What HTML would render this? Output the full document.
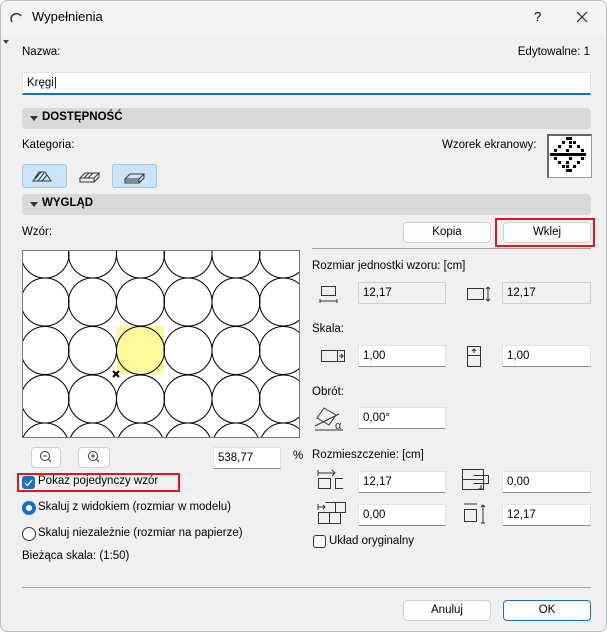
<!DOCTYPE html>
<html><head><meta charset="utf-8"><style>
*{box-sizing:border-box;margin:0;padding:0}
body{width:607px;height:632px;background:#fff;font-family:"Liberation Sans Narrow","Liberation Sans",sans-serif;font-size:11.5px;color:#000;position:relative;overflow:hidden}
.win{position:absolute;left:0;top:0;width:607px;height:632px;background:#f0f0f0;border:1px solid #bdbdbd;border-radius:7px;overflow:hidden}
.a{position:absolute;white-space:nowrap}
.fld{position:absolute;background:#fff;border:1px solid #e3e3e3;border-bottom:1px solid #8a8a8a;height:22px;padding:4px 0 0 4px}
.dis{background:#f0f0f0;border:1px solid #cfcfcf}
.btn{position:absolute;background:#fdfdfd;border:1px solid #d0d0d0;border-radius:4px;height:21px;text-align:center;padding-top:3px}
.hdr{position:absolute;left:21px;width:569px;height:21px;background:#d9d9d9;border-radius:4px;font-weight:bold;padding:3px 0 0 20px}
.hdr:before{content:"";position:absolute;left:8px;top:8px;border-left:4px solid transparent;border-right:4px solid transparent;border-top:5px solid #333}
.red{position:absolute;border:2px solid #e0161c}
</style></head><body><div class="win">
<div class="a" style="left:0;top:0;width:607px;height:34px;background:#f3f3f3"></div>
<svg class="a" style="left:9px;top:10px" width="14" height="14"><path d="M2 11 A5 5 0 0 1 11 5" fill="none" stroke="#333" stroke-width="1.5"/></svg>
<div class="a" style="left:31px;top:8px;font-size:13px">Wypełnienia</div>
<div class="a" style="left:533px;top:8px;font-size:13px">?</div>
<svg class="a" style="left:575px;top:10px" width="12" height="12"><path d="M1 1L11 11M11 1L1 11" stroke="#222" stroke-width="1.2"/></svg>
<div class="a" style="left:2px;top:39px;border-left:3px solid transparent;border-right:3px solid transparent;border-top:4px solid #444"></div>

<div class="a" style="left:21px;top:45px">Nazwa:</div>
<div class="a" style="right:16px;top:45px">Edytowalne: 1</div>
<div class="a" style="left:21px;top:71px;width:569px;height:23px;background:#fff;border:1px solid #e3e3e3;border-bottom:2px solid #1a6fc4;padding:4px 0 0 4px">Kręgi|</div>

<div class="hdr" style="top:107px">DOSTĘPNOŚĆ</div>
<div class="a" style="left:21px;top:138px">Kategoria:</div>
<div class="a" style="left:441px;top:138px">Wzorek ekranowy:</div>
<div class="a" style="left:546px;top:133px;width:45px;height:44px;background:#fff;border:1px solid #999;border-left:2px solid #666;border-top:2px solid #666"></div>
<svg class="a" style="left:549px;top:136px" width="40" height="40" fill="#000">
<rect x="16" y="0" width="3" height="3"/><rect x="19" y="0" width="3" height="3"/>
<rect x="12" y="4" width="3" height="3"/><rect x="19" y="4" width="3" height="3"/><rect x="23" y="4" width="3" height="3"/>
<rect x="8" y="8" width="3" height="3"/><rect x="19" y="8" width="3" height="3"/><rect x="27" y="8" width="3" height="3"/>
<rect x="4" y="12" width="3" height="3"/><rect x="16" y="12" width="3" height="3"/><rect x="31" y="12" width="3" height="3"/>
<rect x="0" y="16" width="36" height="3"/>
<rect x="4" y="20" width="3" height="3"/><rect x="19" y="20" width="3" height="3"/><rect x="31" y="20" width="3" height="3"/>
<rect x="8" y="24" width="3" height="3"/><rect x="16" y="24" width="3" height="3"/><rect x="27" y="24" width="3" height="3"/>
<rect x="12" y="28" width="3" height="3"/><rect x="16" y="28" width="3" height="3"/><rect x="23" y="28" width="3" height="3"/>
<rect x="16" y="32" width="6" height="3"/>
</svg>
<div class="a" style="left:21px;top:163px;width:45px;height:24px;background:#cce4f7;border:1px solid #99c9ef;border-radius:3px"></div>
<div class="a" style="left:111px;top:163px;width:45px;height:24px;background:#cce4f7;border:1px solid #99c9ef;border-radius:3px"></div>
<svg class="a" style="left:21px;top:163px" width="140" height="24" fill="none" stroke="#333" stroke-width="1">
<path d="M11 17L17 8H23L29 17Z M13 15L19 8 M16 17L22 9 M20 17L25 11"/>
<path d="M58 14H72L77 9H63Z M58 14V18H72V14 M72 18L77 13V9 M62 14L67 9 M66 14L71 9"/>
<path d="M103 15H117L122 10H108Z M103 15V19H117V15 M117 19L122 14V10 M103 17H117"/>
</svg>

<div class="hdr" style="top:193px">WYGLĄD</div>
<div class="a" style="left:21px;top:225px">Wzór:</div>
<div class="btn" style="left:402px;top:221px;width:88px">Kopia</div>
<div class="btn" style="left:502px;top:221px;width:88px">Wklej</div>
<div class="red" style="left:494px;top:217px;width:100px;height:29px"></div>

<svg class="a" style="left:21px;top:249px" width="278" height="188">
<rect x="0.5" y="0.5" width="277" height="187" fill="#fff" stroke="#777"/>
<rect x="95" y="76" width="47" height="48" fill="#fdf89a"/>
<g fill="none" stroke="#000" stroke-width="1">
<defs><clipPath id="c"><rect x="1" y="1" width="276" height="186"/></clipPath></defs>
<g clip-path="url(#c)">
<circle cx="23" cy="4" r="24"/><circle cx="70.5" cy="4" r="24"/><circle cx="118.5" cy="4" r="24"/><circle cx="166" cy="4" r="24"/><circle cx="214" cy="4" r="24"/><circle cx="261.5" cy="4" r="24"/>
<circle cx="23" cy="52" r="24"/><circle cx="70.5" cy="52" r="24"/><circle cx="118.5" cy="52" r="24"/><circle cx="166" cy="52" r="24"/><circle cx="214" cy="52" r="24"/><circle cx="261.5" cy="52" r="24"/>
<circle cx="23" cy="100.5" r="24"/><circle cx="70.5" cy="100.5" r="24"/><circle cx="118.5" cy="100.5" r="24"/><circle cx="166" cy="100.5" r="24"/><circle cx="214" cy="100.5" r="24"/><circle cx="261.5" cy="100.5" r="24"/>
<circle cx="23" cy="149" r="24"/><circle cx="70.5" cy="149" r="24"/><circle cx="118.5" cy="149" r="24"/><circle cx="166" cy="149" r="24"/><circle cx="214" cy="149" r="24"/><circle cx="261.5" cy="149" r="24"/>
<circle cx="23" cy="197" r="24"/><circle cx="70.5" cy="197" r="24"/><circle cx="118.5" cy="197" r="24"/><circle cx="166" cy="197" r="24"/><circle cx="214" cy="197" r="24"/><circle cx="261.5" cy="197" r="24"/>
</g>
<path d="M91 121L97 127M97 121L91 127" stroke-width="2"/>
</g></svg>

<div class="a" style="left:311px;top:247px;width:279px;height:1px;background:#a0a0a0"></div>
<div class="a" style="left:311px;top:259px">Rozmiar jednostki wzoru: [cm]</div>
<svg class="a" style="left:316px;top:284px" width="180" height="24" fill="none" stroke="#333">
<path d="M4.5 1.5H18.5V10.5H4.5Z M3 16H20 M3 14V18 M20 14V18"/>
<path d="M150.5 3.5H166.5V14.5H150.5Z M171 2V16 M169 4L171 2L173 4 M169 14L171 16L173 14"/>
</svg>
<div class="fld dis" style="left:357px;top:281px;width:88px">12,17</div>
<div class="fld dis" style="left:501px;top:281px;width:89px">12,17</div>
<div class="a" style="left:311px;top:322px">Skala:</div>
<svg class="a" style="left:316px;top:342px" width="180" height="26" fill="none" stroke="#333">
<path d="M4.5 7.5H20.5V18.5H4.5Z M20.5 7.5H27.5V18.5H20.5 M22 13H26 M24 11L26 13L24 15"/>
<path d="M150.5 3.5H163.5V23.5H150.5Z M150.5 12.5H163.5 M157 10V6 M155 8L157 6L159 8"/>
</svg>
<div class="fld" style="left:357px;top:344px;width:88px">1,00</div>
<div class="fld" style="left:501px;top:344px;width:89px">1,00</div>
<div class="a" style="left:311px;top:385px">Obrót:</div>
<svg class="a" style="left:312px;top:403px" width="36" height="28" fill="none" stroke="#333">
<path d="M4 14L11 4L23 11L16 21Z M2 22L26 10 M2 26H30"/>
<text x="22" y="25" font-size="11" fill="#333" stroke="none" font-family="Liberation Sans">α</text>
</svg>
<div class="fld" style="left:357px;top:406px;width:88px">0,00°</div>

<div class="btn" style="left:30px;top:446px;width:30px;height:21px"></div>
<div class="btn" style="left:77px;top:446px;width:32px;height:21px"></div>
<svg class="a" style="left:30px;top:446px" width="80" height="21" fill="none" stroke="#333">
<circle cx="14" cy="9" r="4.5"/><path d="M12 9H16 M17.5 12.5L20 15"/>
<circle cx="62" cy="9" r="4.5"/><path d="M60 9H64 M62 7V11 M65.5 12.5L68 15"/>
</svg>
<div class="fld" style="left:212px;top:446px;width:68px">538,77</div>
<div class="a" style="left:292px;top:449px">%</div>
<div class="a" style="left:311px;top:448px">Rozmieszczenie: [cm]</div>
<svg class="a" style="left:314px;top:466px" width="200" height="62" fill="none" stroke="#333">
<path d="M3 6H20 M17 3L20 6L17 9 M3 3V9 M3.5 11.5H15.5V21.5H3.5Z M28 11.5H20.5V21.5H28"/>
<path d="M3 40H10 M8 38L10 40L8 42 M3 37V43 M10.5 35.5H30.5V45.5H10.5 M20.5 35.5V45.5 M3.5 45.5H25.5V56.5H3.5Z M14.5 45.5V56.5"/>
<path d="M147.5 2.5H168.5V22.5H147.5Z M147.5 12.5H168.5 M158.5 8.5H173.5V16.5H158.5 M166 18V22 M163 22H169"/>
<path d="M149 37H162 M149.5 42.5H161.5V54.5H149.5Z M168 38V56 M166 40L168 38L170 40 M166 56H170"/>
</svg>
<div class="fld" style="left:357px;top:470px;width:88px">12,17</div>
<div class="fld" style="left:501px;top:470px;width:89px">0,00</div>
<div class="fld" style="left:357px;top:503px;width:88px">0,00</div>
<div class="fld" style="left:501px;top:503px;width:89px">12,17</div>
<div class="a" style="left:312px;top:534px;width:13px;height:13px;border:1px solid #333;border-radius:3px;background:#fff"></div>
<div class="a" style="left:328px;top:534px">Układ oryginalny</div>

<div class="a" style="left:21px;top:475px;width:13px;height:13px;background:#1a6fc4;border-radius:3px"></div>
<svg class="a" style="left:21px;top:475px" width="13" height="13"><path d="M3 7L5.5 9.5L10 4" fill="none" stroke="#fff" stroke-width="1.2"/></svg>
<div class="a" style="left:37px;top:474px">Pokaż pojedynczy wzór</div>
<div class="red" style="left:16px;top:472px;width:163px;height:19px"></div>
<div class="a" style="left:21px;top:500px;width:14px;height:14px;border-radius:50%;background:#1a6fc4"></div>
<div class="a" style="left:25px;top:504px;width:6px;height:6px;border-radius:50%;background:#fff"></div>
<div class="a" style="left:37px;top:500px">Skaluj z widokiem (rozmiar w modelu)</div>
<div class="a" style="left:21px;top:526px;width:14px;height:14px;border-radius:50%;border:1px solid #333;background:#fff"></div>
<div class="a" style="left:37px;top:526px">Skaluj niezależnie (rozmiar na papierze)</div>
<div class="a" style="left:21px;top:549px">Bieżąca skala: (1:50)</div>

<div class="a" style="left:21px;top:586px;width:569px;height:1px;background:#a0a0a0"></div>
<div class="btn" style="left:402px;top:599px;width:88px">Anuluj</div>
<div class="btn" style="left:502px;top:599px;width:88px;border:1px solid #1a6fc4">OK</div>
</div></body></html>
